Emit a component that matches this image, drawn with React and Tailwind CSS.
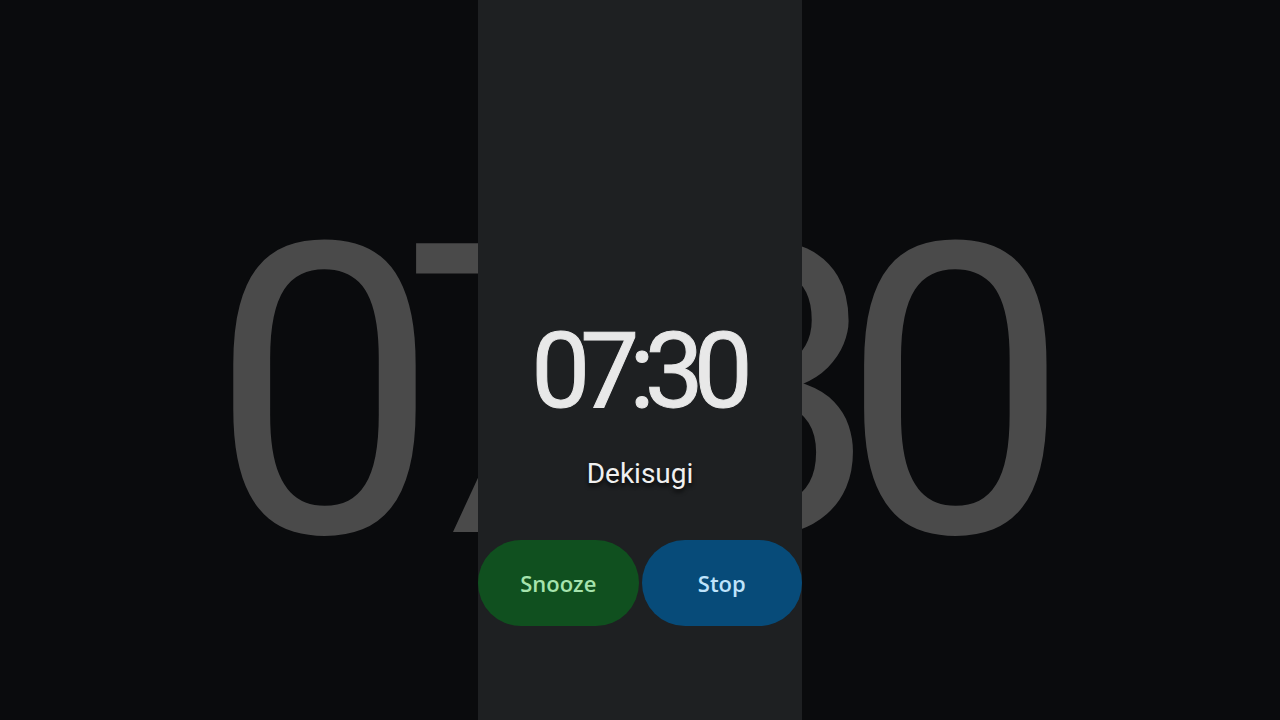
import React from 'react';

const App = () => {
    return (
        <div className="relative w-full h-[720px] overflow-hidden bg-[#0a0b0d] font-['Roboto',sans-serif]">
            <div className="absolute inset-0 flex justify-center">
                <div className="mt-[190px] ml-[-38px] text-[406px] leading-none tracking-[-38px] text-[#4a4a4a] select-none">
                    07:30
                </div>
            </div>

            <div className="relative flex justify-center h-full">
                <div className="w-[324px] h-full bg-[#1e2022] flex flex-col items-center">
                    <div className="mt-[319px] ml-[-6px] text-[105px] leading-none tracking-[-10px] text-[#e8e8e8] [-webkit-text-stroke:1px_#e8e8e8]">
                        07:30
                    </div>
                    <div className="mt-[36px] text-[28px] leading-none text-[#f0f0f0] [text-shadow:0_3px_4px_rgba(0,0,0,0.8)]">
                        Dekisugi
                    </div>
                    <div className="mt-[52px] w-full flex gap-[3px]">
                        <button className="flex-1 h-[86px] rounded-full bg-[#10501f] text-[#a6e3ad] text-[22px] font-semibold font-['Open_Sans',sans-serif]">
                            Snooze
                        </button>
                        <button className="flex-1 h-[86px] rounded-full bg-[#074b79] text-[#bfe3fb] text-[22px] font-semibold font-['Open_Sans',sans-serif]">
                            Stop
                        </button>
                    </div>
                </div>
            </div>
        </div>
    );
};

export default App;
